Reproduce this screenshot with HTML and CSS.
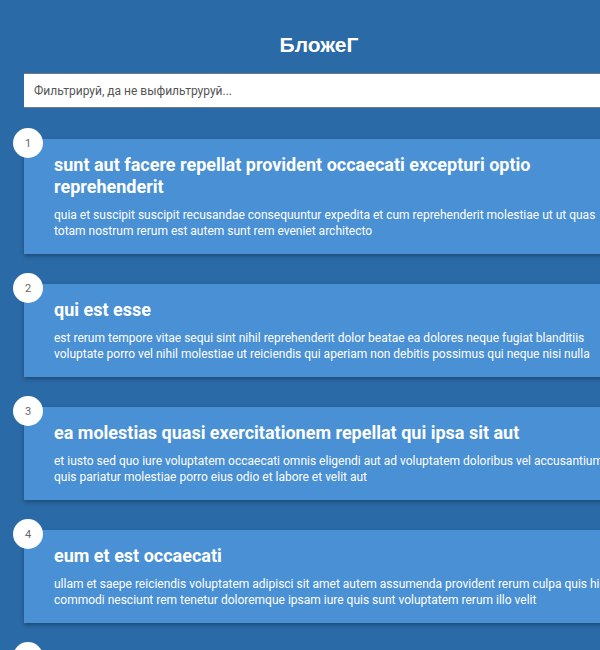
FILE: index.html
```html
<!DOCTYPE html>
<html lang="ru">
<head>
<meta charset="utf-8">
<title>БложеГ</title>
<link rel="stylesheet" href="styles.css">
</head>
<body>
<div class="page">
  <h1 class="logo">БложеГ</h1>
  <input class="filter" type="text" placeholder="Фильтрируй, да не выфильтруруй...">
  <ul class="posts">
    <li class="post">
      <span class="num">1</span>
      <h2 class="post-title">sunt aut facere repellat provident occaecati excepturi optio reprehenderit</h2>
      <p class="post-body">quia et suscipit suscipit recusandae consequuntur expedita et cum reprehenderit molestiae ut ut quas totam nostrum rerum est autem sunt rem eveniet architecto</p>
    </li>
    <li class="post">
      <span class="num">2</span>
      <h2 class="post-title">qui est esse</h2>
      <p class="post-body">est rerum tempore vitae sequi sint nihil reprehenderit dolor beatae ea dolores neque fugiat blanditiis voluptate porro vel nihil molestiae ut reiciendis qui aperiam non debitis possimus qui neque nisi nulla</p>
    </li>
    <li class="post">
      <span class="num">3</span>
      <h2 class="post-title">ea molestias quasi exercitationem repellat qui ipsa sit aut</h2>
      <p class="post-body">et iusto sed quo iure voluptatem occaecati omnis eligendi aut ad voluptatem doloribus vel accusantium quis pariatur molestiae porro eius odio et labore et velit aut</p>
    </li>
    <li class="post">
      <span class="num">4</span>
      <h2 class="post-title">eum et est occaecati</h2>
      <p class="post-body">ullam et saepe reiciendis voluptatem adipisci sit amet autem assumenda provident rerum culpa quis hic commodi nesciunt rem tenetur doloremque ipsam iure quis sunt voluptatem rerum illo velit</p>
    </li>
    <li class="post">
      <span class="num">5</span>
      <h2 class="post-title">nesciunt quas odio</h2>
      <p class="post-body">repudiandae veniam quaerat sunt sed alias aut fugiat sit autem sed est voluptatem omnis possimus esse voluptatibus quis est aut tenetur dolor neque</p>
    </li>
  </ul>
</div>
</body>
</html>
```
FILE: styles.css
```css
html, body {
  margin: 0;
  padding: 0;
  overflow: hidden;
  background: #2a6aa7;
}
body {
  font-family: Roboto, "Liberation Sans", sans-serif;
  color: #fff;
}
.page {
  width: 590px;
  padding: 30px 0 0 24px;
}
.logo {
  margin: 0 0 13px;
  font-family: "Liberation Sans", Arial, sans-serif;
  font-size: 21px;
  line-height: 30px;
  font-weight: 700;
  text-align: center;
  color: #fff;
}
.filter {
  display: block;
  box-sizing: border-box;
  width: 100%;
  height: 35px;
  margin: 0;
  padding: 0 10px;
  border: 1px solid #6f7a86;
  border-left: none;
  background: #fff;
  font-family: Roboto, sans-serif;
  font-size: 12px;
  color: #333;
  outline: none;
}
.filter::placeholder {
  color: #555;
}
.posts {
  list-style: none;
  margin: 31px 0 0;
  padding: 0;
  display: flex;
  flex-direction: column;
  gap: 30px;
}
.post {
  position: relative;
  background: #4990d5;
  padding: 15px 0 15px 30px;
  box-shadow: 0 2px 4px rgba(0, 0, 0, 0.3);
}
.num {
  position: absolute;
  left: -11px;
  top: -11px;
  width: 30px;
  height: 30px;
  border-radius: 50%;
  background: #fff;
  color: #666;
  font-size: 11px;
  display: flex;
  align-items: center;
  justify-content: center;
}
.post-title {
  margin: 0 0 9px;
  font-size: 18px;
  line-height: 22px;
  font-weight: 700;
}
.post-body {
  margin: 0;
  font-size: 12px;
  line-height: 16px;
}
```
